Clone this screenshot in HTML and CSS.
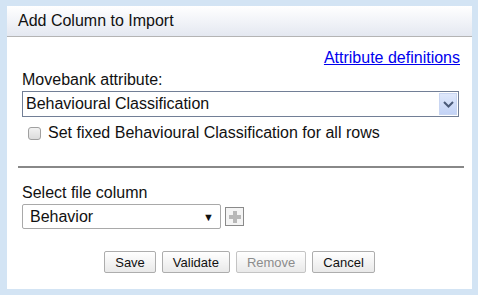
FILE: index.html
```html
<!DOCTYPE html>
<html lang="en">
<head>
  <meta charset="UTF-8" />
  <title>Add Column to Import</title>
  <link rel="stylesheet" href="styles.css">
</head>
<body>
  <div class="dialog">
    <div class="dialog-title">Add Column to Import</div>
    <div class="dialog-body">
      <div class="link-row"><a href="#">Attribute definitions</a></div>
      <div class="label">Movebank attribute:</div>
      <div class="select wide">
        <span>Behavioural Classification</span>
        <span class="drop-btn">
          <svg width="11" height="7" viewBox="0 0 11 7"><path d="M1 1 L5.5 5.5 L10 1" fill="none" stroke="#4a5a78" stroke-width="2"/></svg>
        </span>
      </div>
      <label class="check-row">
        <span class="checkbox"></span>
        Set fixed Behavioural Classification for all rows
      </label>
      <hr class="divider">
      <div class="label">Select file column</div>
      <div class="file-row">
        <div class="select narrow">
          <span>Behavior</span>
          <span class="arrow">&#9660;</span>
        </div>
        <span class="plus-btn">
          <svg width="12" height="12" viewBox="0 0 12 12"><path d="M4 0h4v4h4v4h-4v4h-4v-4h-4v-4h4z" fill="#b8b8b8"/></svg>
        </span>
      </div>
      <div class="buttons">
        <button class="btn">Save</button>
        <button class="btn">Validate</button>
        <button class="btn" disabled>Remove</button>
        <button class="btn">Cancel</button>
      </div>
    </div>
  </div>
</body>
</html>
```

FILE: styles.css
```css
* { box-sizing: border-box; }
body {
  margin: 0;
  background: #d3e4f4;
  font-family: "Liberation Sans", Arial, sans-serif;
  font-size: 16px;
  color: #111;
}
.dialog {
  margin: 6px 0 0 7px;
  width: 465px; height: 283px;
  background: #fff;
}
.dialog-title {
  height: 31px;
  padding: 6px 0 0 11px;
  background: linear-gradient(#ffffff, #e4e8f1);
  border-bottom: 1px solid #b4b4b4;
}
.dialog-body { padding: 0 12px 0 15px; }

.link-row { text-align: right; padding-top: 12px; height: 33px; }
.link-row a { color: #0000ee; text-decoration: underline; }

.label { height: 21px; line-height: 19px; }

.select {
  display: flex; align-items: center; justify-content: space-between;
  border: 1px solid #727f96;
  background: #fff;
  padding-left: 3px;
}
.select.wide { width: 437px; height: 26px; padding-right: 1px; }
.drop-btn {
  width: 18px; height: 22px;
  display: flex; align-items: center; justify-content: center;
  background: linear-gradient(#dfe8fb, #c3d3f6);
  border: 1px solid #c9d6f2;
}

.check-row {
  display: flex; align-items: center;
  height: 34px; padding: 0 0 2px 6px;
}
.checkbox {
  width: 13px; height: 13px; margin-right: 7px;
  border: 1px solid #a0a0a0; border-radius: 3px;
  background: linear-gradient(#f2f2f2, #dcdcdc);
}

.divider {
  margin: 15px 0 15px -4px;
  width: 446px;
  border: 0; border-top: 2px solid #888;
}

.file-row { display: flex; align-items: center; gap: 4px; }
.select.narrow {
  width: 199px; height: 25px;
  border-color: #a9a9a9; border-radius: 2px;
  padding: 0 6px 0 7px;
}
.arrow { font-size: 11px; }
.plus-btn {
  width: 19px; height: 19px;
  display: flex; align-items: center; justify-content: center;
  border: 1px solid #8a8a8a;
  background: #f4f4f4;
}

.buttons {
  display: flex; justify-content: center; gap: 6px;
  margin-top: 22px; padding-right: 3px;
}
.btn {
  font-family: inherit; font-size: 13px;
  height: 22px; padding: 0 10px;
  color: #111;
  background: linear-gradient(#ffffff, #e9e9e9);
  border: 1px solid #adadad; border-radius: 2px;
}
.btn:disabled { color: #8c8c8c; border-color: #c4c4c4; }
```
